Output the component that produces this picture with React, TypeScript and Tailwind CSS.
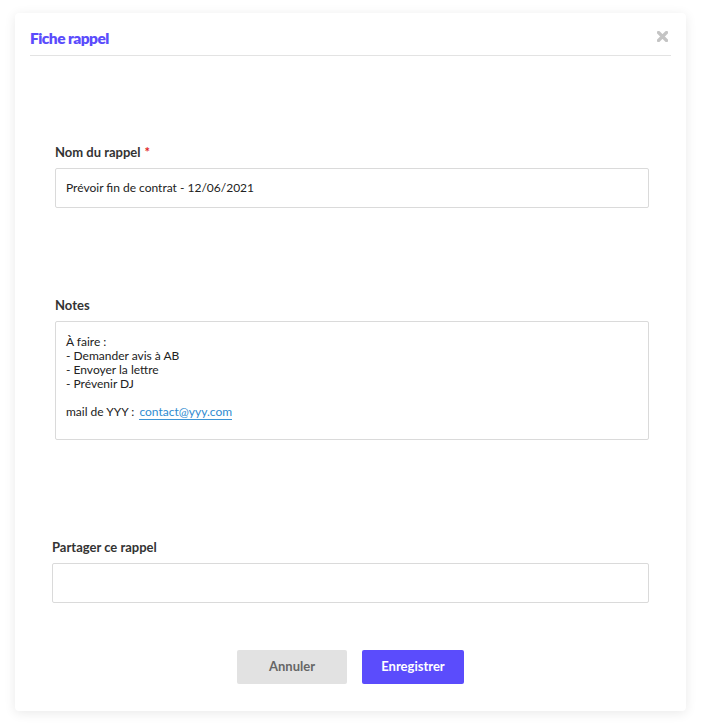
import React from "react";

const font = { fontFamily: "Lato, 'Noto Sans', sans-serif" };

function FieldLabel({ children, required }: { children: React.ReactNode; required?: boolean }) {
  return (
    <label className="block text-[13px] font-bold leading-4 text-[#333333]">
      {children}
      {required && <span className="ml-1 text-[#e02424]">*</span>}
    </label>
  );
}

export default function App() {
  return (
    <div className="min-h-[728px] w-[701px] bg-white pt-[13px] pl-[15px]" style={font}>
      <div className="flex h-[698px] w-[671px] flex-col rounded-[4px] bg-white shadow-[0_2px_12px_rgba(0,0,0,0.09)]">
        {/* header */}
        <div className="mx-[15px] flex h-[43px] items-start justify-between border-b border-[#e3e3e3]">
          <h2 className="pt-[15px] text-[15.5px] font-extrabold leading-5 tracking-[-0.035em] text-[#5b4cfc]">
            Fiche rappel
          </h2>
          <svg width="11" height="11" viewBox="0 0 11 11" className="mr-[3px] mt-[18px]">
            <path d="M1.5 1.5 L9.5 9.5 M9.5 1.5 L1.5 9.5" stroke="#c4c4c4" strokeWidth="3.2" strokeLinecap="round" />
          </svg>
        </div>

        {/* body */}
        <div className="flex flex-1 flex-col pl-[40px] pr-[37px]">
          <div className="mt-[88px]">
            <FieldLabel required>Nom du rappel</FieldLabel>
            <div className="mt-[8px] flex h-[40px] items-center rounded-[2px] border border-[#dadada] px-[10px] text-[12px] text-[#222222]">
              Prévoir fin de contrat - 12/06/2021
            </div>
          </div>

          <div className="mt-[89px]">
            <FieldLabel>Notes</FieldLabel>
            <div className="mt-[8px] h-[119px] rounded-[2px] border border-[#dadada] px-[10px] pt-[13px] text-[12px] leading-[14px] text-[#222222]">
              <div>À faire :</div>
              <div>- Demander avis à AB</div>
              <div>- Envoyer la lettre</div>
              <div>- Prévenir DJ</div>
              <div className="h-[14px]" />
              <div>
                mail de YYY :{" "}
                <span className="ml-[2px] border-b border-[#3d95d6] text-[#2f8bd0]">contact@yyy.com</span>
              </div>
            </div>
          </div>

          <div className="-ml-[3px] mt-[99px]">
            <FieldLabel>Partager ce rappel</FieldLabel>
            <div className="mt-[8px] h-[40px] rounded-[2px] border border-[#dadada]" />
          </div>

          <div className="mt-[47px] flex justify-center gap-[15px] pr-[3px]">
            <button className="h-[34px] w-[110px] rounded-[2px] bg-[#e2e2e2] text-[13px] font-bold text-[#666666]">
              Annuler
            </button>
            <button className="h-[34px] w-[102px] rounded-[2px] bg-[#5b4cfc] text-[13px] font-bold text-white">
              Enregistrer
            </button>
          </div>
        </div>
      </div>
    </div>
  );
}
